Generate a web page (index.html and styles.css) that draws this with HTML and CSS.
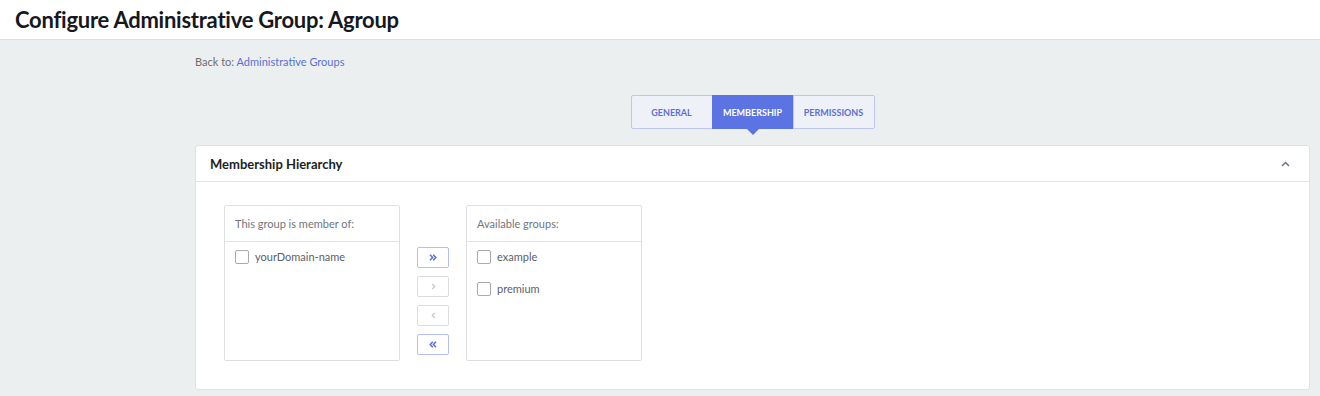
FILE: index.html
```html
<!DOCTYPE html>
<html>
<head>
<meta charset="utf-8">
<link rel="stylesheet" href="styles.css">
</head>
<body>
<header class="page-header">
  <h1 class="page-title">Configure Administrative Group: Agroup</h1>
</header>
<main class="content">
  <div class="back">Back to: <a href="#" class="back-link">Administrative Groups</a></div>
  <div class="tabs-wrap">
    <div class="tabs">
      <div class="tab">GENERAL</div>
      <div class="tab active">MEMBERSHIP</div>
      <div class="tab">PERMISSIONS</div>
    </div>
  </div>
  <section class="panel">
    <div class="panel-head">
      <span class="panel-title">Membership Hierarchy</span>
      <svg class="collapse" width="9" height="6" viewBox="0 0 9 6"><path d="M1 5 L4.5 1.5 L8 5" fill="none" stroke="#6b7280" stroke-width="1.5"/></svg>
    </div>
    <div class="panel-body">
      <div class="listbox">
        <div class="list-head">This group is member of:</div>
        <div class="list-items">
          <label class="item"><span class="check"></span>yourDomain-name</label>
        </div>
      </div>
      <div class="movers">
        <button class="mv on"><svg width="8" height="7" viewBox="0 0 8 7"><path d="M1 0.8 L3.6 3.5 L1 6.2 M4.2 0.8 L6.8 3.5 L4.2 6.2" fill="none" stroke="#5a6fe0" stroke-width="1.5"/></svg></button>
        <button class="mv"><svg width="5" height="7" viewBox="0 0 5 7"><path d="M1.2 0.8 L3.8 3.5 L1.2 6.2" fill="none" stroke="#c3c6ce" stroke-width="1.2"/></svg></button>
        <button class="mv"><svg width="5" height="7" viewBox="0 0 5 7"><path d="M3.8 0.8 L1.2 3.5 L3.8 6.2" fill="none" stroke="#c3c6ce" stroke-width="1.2"/></svg></button>
        <button class="mv on"><svg width="8" height="7" viewBox="0 0 8 7"><path d="M3.8 0.8 L1.2 3.5 L3.8 6.2 M7 0.8 L4.4 3.5 L7 6.2" fill="none" stroke="#5a6fe0" stroke-width="1.5"/></svg></button>
      </div>
      <div class="listbox">
        <div class="list-head">Available groups:</div>
        <div class="list-items">
          <label class="item"><span class="check"></span>example</label>
          <label class="item"><span class="check"></span>premium</label>
        </div>
      </div>
    </div>
  </section>
</main>
</body>
</html>
```

FILE: styles.css
```css
html, body {
  margin: 0;
  padding: 0;
}
body {
  background: #eceff0;
  font-family: "Source Sans Pro", Lato, "Liberation Sans", sans-serif;
  color: #333;
  height: 396px;
  overflow: hidden;
}
.page-header {
  background: #fff;
  height: 40px;
  border-bottom: 1px solid #dcdfe2;
  box-sizing: border-box;
  display: flex;
  align-items: center;
  padding-left: 15px;
}
.page-title {
  margin: 0;
  font-size: 22px;
  font-weight: 700;
  color: #16181d;
  letter-spacing: -0.25px;
}
.content {
  padding: 14px 10px 0 195px;
}
.back {
  font-size: 11px;
  color: #6b6e73;
  line-height: 16px;
}
.back-link {
  color: #5a70d8;
  text-decoration: none;
}
.tabs-wrap {
  display: flex;
  justify-content: center;
  margin-top: 25px;
}
.tabs {
  display: flex;
  border: 1px solid #bcc6ef;
  border-radius: 2px;
  background: #eef1f8;
  height: 34px;
  box-sizing: border-box;
}
.tab {
  width: 80px;
  display: flex;
  align-items: center;
  justify-content: center;
  font-size: 9px;
  font-weight: 700;
  color: #5a70d8;
  position: relative;
}
.tab + .tab {
  border-left: 1px solid #bcc6ef;
}
.tab.active {
  background: #5b73e3;
  color: #fff;
  margin-top: -1px;
  margin-bottom: -1px;
  border-left-color: #5b73e3;
}
.tab.active::after {
  content: "";
  position: absolute;
  left: 50%;
  bottom: -6px;
  margin-left: -6px;
  border-left: 6px solid transparent;
  border-right: 6px solid transparent;
  border-top: 6px solid #5b73e3;
}
.panel {
  margin-top: 16px;
  background: #fff;
  border: 1px solid #dfe1e4;
  border-radius: 3px;
  height: 245px;
  box-sizing: border-box;
}
.panel-head {
  height: 35px;
  border-bottom: 1px solid #e2e4e7;
  display: flex;
  align-items: center;
  justify-content: space-between;
  padding: 0 19px 0 14px;
}
.panel-title {
  font-size: 13px;
  font-weight: 700;
  color: #1c1f24;
}
.panel-body {
  display: flex;
  align-items: flex-start;
  padding: 23px 0 0 28px;
  gap: 17px;
}
.listbox {
  width: 176px;
  height: 156px;
  border: 1px solid #dedfe2;
  border-radius: 2px;
  box-sizing: border-box;
}
.list-head {
  height: 35px;
  border-bottom: 1px solid #e2e3e6;
  display: flex;
  align-items: center;
  padding-left: 10px;
  font-size: 11px;
  color: #72757a;
}
.list-items {
  padding: 7px 0 0 10px;
  display: flex;
  flex-direction: column;
  gap: 17px;
}
.item {
  display: flex;
  align-items: center;
  font-size: 11px;
  color: #5d6066;
  height: 15px;
}
.check {
  width: 14px;
  height: 14px;
  border: 1px solid #a7aaaf;
  border-radius: 2px;
  margin-right: 6px;
  box-sizing: border-box;
}
.movers {
  display: flex;
  flex-direction: column;
  gap: 8px;
  margin-top: 42px;
}
.mv {
  width: 32px;
  height: 21px;
  padding: 0;
  border: 1px solid #dadcdf;
  border-radius: 2px;
  background: #fff;
  display: flex;
  align-items: center;
  justify-content: center;
}
.mv.on {
  border-color: #b3bff0;
}
```
